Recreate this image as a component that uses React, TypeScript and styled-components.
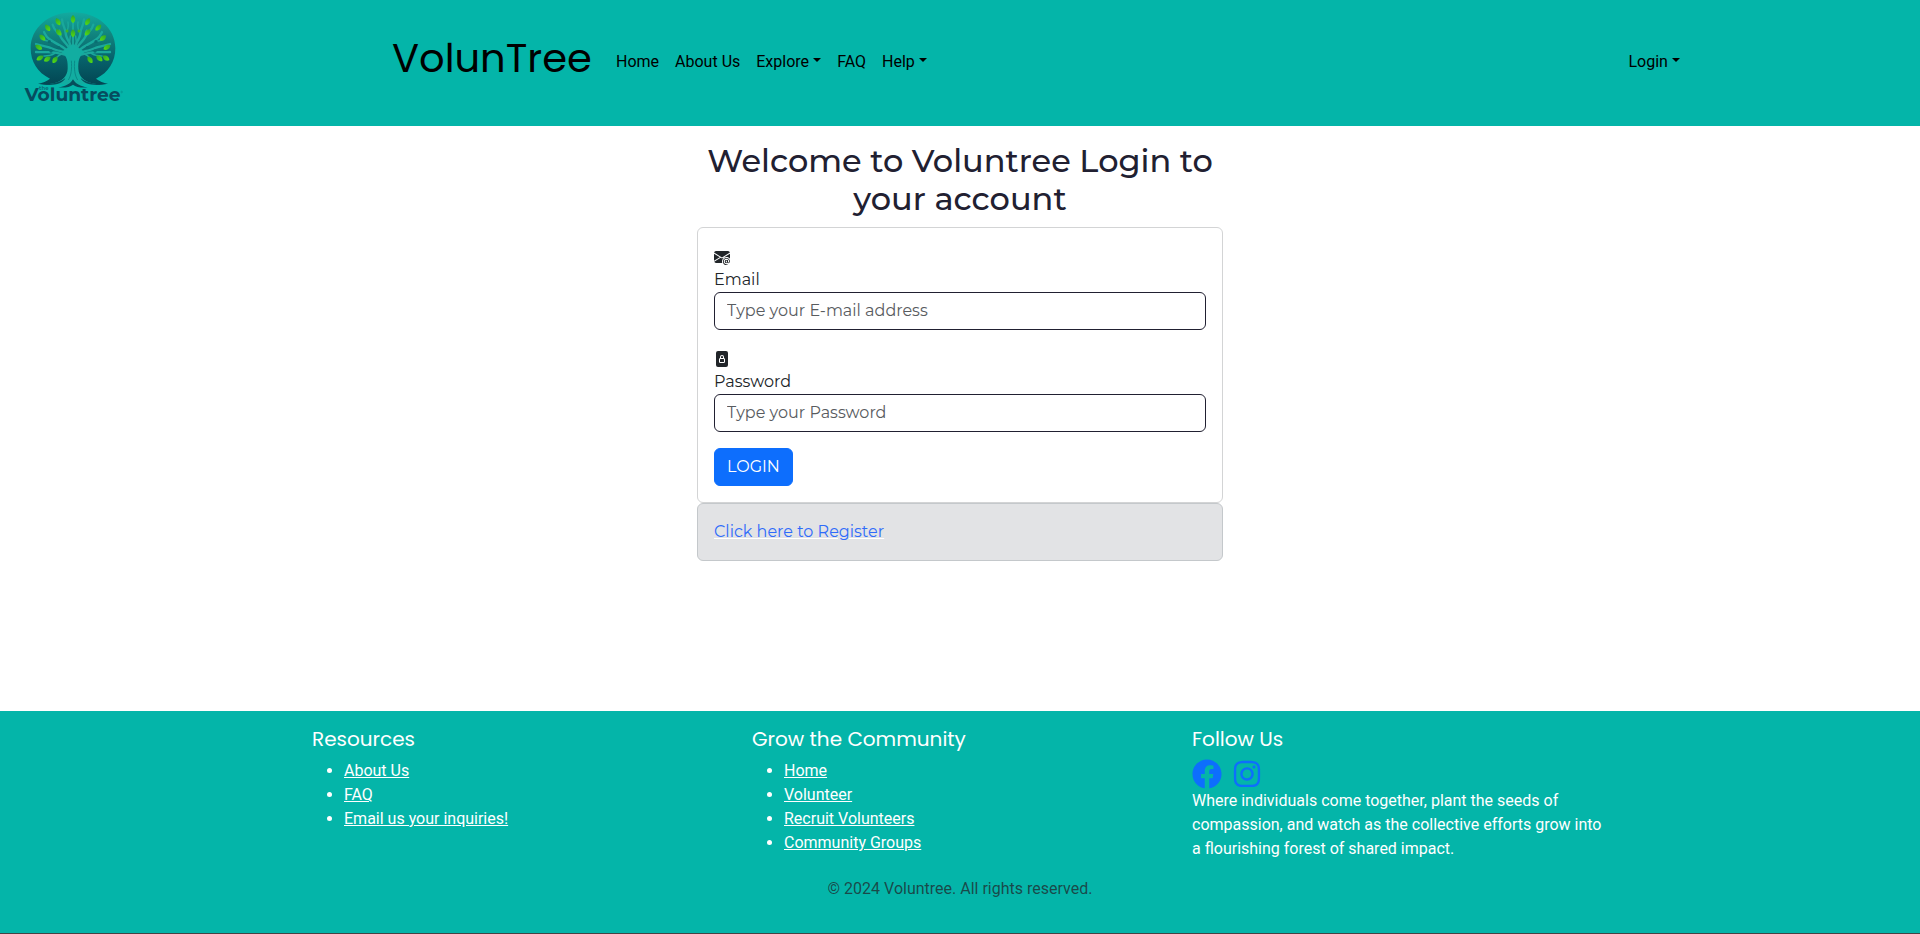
import React from 'react';
import styled, { createGlobalStyle } from 'styled-components';
import { BsEnvelopeAtFill, BsFileLockFill } from 'react-icons/bs';
import { FaFacebook, FaInstagram } from 'react-icons/fa';

const TEAL = '#04b5a9';
const display = "Poppins, Inter, 'Open Sans', sans-serif";
const formFont = "Montserrat, Inter, 'Open Sans', sans-serif";

const GlobalStyle = createGlobalStyle`
  *, *::before, *::after { box-sizing: border-box; }
  html { background: #444; }
  body {
    margin: 0;
    background: #444;
    color: #212529;
    font: 400 16px/1.5 Roboto, sans-serif;
  }
  svg { vertical-align: middle; }
`;

const Page = styled.div`
  display: flex;
  flex-direction: column;
  height: 933px;
  background: #fff;
`;

const Header = styled.header`
  display: flex;
  align-items: flex-start;
  flex: none;
  height: 126px;
  background: ${TEAL};
`;

const LogoLink = styled.a`
  display: block;
  width: 160px;
  height: 126px;
`;

const Nav = styled.nav`
  display: flex;
  align-items: center;
  flex: 1;
  height: 123px;
  margin: 0 232px;
`;

const Brand = styled.a`
  width: 216px;
  padding-bottom: 8px;
  color: #000;
  font-family: ${display};
  font-size: 40px;
  line-height: 60px;
  white-space: nowrap;
`;

const NavLinks = styled.div`
  display: flex;
  flex: 1;
`;

const NavLink = styled.a<{ $caret?: boolean; $end?: boolean }>`
  padding: 8px;
  margin-left: ${(p) => (p.$end ? 'auto' : '0')};
  color: #000;
  white-space: nowrap;

  &::after {
    content: '';
    display: ${(p) => (p.$caret ? 'inline-block' : 'none')};
    margin-left: 0.255em;
    vertical-align: 0.255em;
    border-top: 0.3em solid;
    border-right: 0.3em solid transparent;
    border-left: 0.3em solid transparent;
  }
`;

const Main = styled.main`
  flex: 1;
  width: 526px;
  margin: 0 auto;
  padding-top: 16px;
  font-family: ${formFont};
  font-size: 16px;
  line-height: 24px;
`;

const Title = styled.h2`
  margin: 0 0 8px;
  color: #212031;
  font-size: 32px;
  font-weight: 500;
  line-height: 38.4px;
  text-align: center;
`;

const Card = styled.section<{ $muted?: boolean }>`
  padding: 16px;
  border: 1px solid ${(p) => (p.$muted ? '#c4c8cb' : '#d3d4d5')};
  border-radius: 6px;
  background: ${(p) => (p.$muted ? '#e2e3e5' : '#fff')};
`;

const Field = styled.div`
  margin-bottom: 16px;
`;

const IconLine = styled.div`
  height: 24px;
`;

const Label = styled.label`
  display: block;
`;

const Input = styled.input`
  display: block;
  width: 100%;
  height: 38px;
  padding: 6px 12px;
  border: 1px solid #212031;
  border-radius: 6px;
  background: #fff;
  font: inherit;

  &::placeholder { color: #595c5f; opacity: 1; }
`;

const Button = styled.button`
  display: block;
  height: 38px;
  padding: 6px 12px;
  border: 1px solid #0d6efd;
  border-radius: 6px;
  background: #0d6efd;
  color: #fff;
  font: inherit;
`;

const RegisterLink = styled.a`
  color: #2f6bfa;
  text-decoration: underline;
  text-decoration-color: #fff;
`;

const Footer = styled.footer`
  flex: none;
  height: 222px;
  padding-top: 16px;
  background: ${TEAL};
  color: #fff;
`;

const Columns = styled.div`
  display: grid;
  grid-template-columns: repeat(3, 440px);
  width: 1320px;
  height: 150px;
  margin: 0 auto;
  padding-left: 12px;
`;

const FooterTitle = styled.h5`
  margin: 0 0 8px;
  font-family: ${display};
  font-size: 20px;
  font-weight: 400;
  line-height: 24px;
`;

const List = styled.ul`
  margin: 0;
  padding-left: 32px;
`;

const ListLink = styled.a`
  text-decoration: underline;
`;

const Socials = styled.div`
  display: flex;
  gap: 10px;
  height: 30px;
  color: #0d6efd;
  font-size: 30px;
`;

const Blurb = styled.p`
  width: 416px;
  margin: 0;
`;

const Copyright = styled.p`
  margin: 0;
  color: rgba(33, 37, 41, 0.75);
  text-align: center;
`;

const leaves: [number, number, number][] = [
  [143, 83, -35], [174, 65, -30], [219, 57, 0], [263, 65, 30], [295, 83, 45],
  [127, 113, -45], [176, 97, -40], [219, 100, 0], [263, 97, 40], [309, 114, 50],
  [116, 142, -60], [321, 142, 60], [120, 174, 60], [165, 179, 35], [142, 177, 55],
  [270, 179, -35], [298, 175, -50], [318, 174, -55],
];

const buds: [number, number][] = [[201, 93], [237, 93]];

// Left half of the crown; the right half is its mirror image.
const limbs = [
  'M212 182 C204 160 184 162 166 158 S130 158 108 156',
  'M212 172 C198 150 180 156 160 147 S134 140 108 132',
  'M212 164 C196 140 176 136 158 124 S138 108 132 96',
  'M214 156 C206 134 188 124 182 110 S162 92 158 74',
  'M216 150 C214 130 198 118 197 100 S188 80 186 58',
];
const twigs = [
  'M166 158 C156 168 142 166 132 168',
  'M184 162 C176 166 172 170 168 174',
  'M158 124 C146 124 138 124 130 118',
  'M182 110 C184 100 182 98 178 90',
  'M197 100 C204 90 206 78 204 66',
  'M219 150 L219 112',
  'M208 140 C208 126 210 120 211 108',
  'M219 88 L219 66',
];

function CrownHalf() {
  return (
    <g fill="none" stroke="#1aa89c" strokeLinecap="round">
      {limbs.map((d) => <path key={d} d={d} strokeWidth="7" />)}
      {twigs.map((d) => <path key={d} d={d} strokeWidth="4.5" />)}
    </g>
  );
}

function Logo() {
  return (
    <svg width="160" height="126" viewBox="0 0 480 378" role="img" aria-label="the Voluntree">
      <defs>
        <linearGradient id="crown" x1="0" y1="0" x2="0" y2="1">
          <stop offset="0" stopColor="#12aaa0" />
          <stop offset="0.3" stopColor="#11857f" />
          <stop offset="0.62" stopColor="#07646d" />
          <stop offset="1" stopColor="#034653" />
        </linearGradient>
        <linearGradient id="leaf" x1="0" y1="0" x2="0" y2="1">
          <stop offset="0" stopColor="#2fa42a" />
          <stop offset="1" stopColor="#55dc13" />
        </linearGradient>
      </defs>
      <path
        d="M150 236 C112 218 92 184 92 145 C92 84 146 37 219 37 S346 84 346 145 C346 184 326 218 288 236 C299 244 310 249 324 251 C285 255 252 250 231 232 L207 232 C186 250 153 255 114 251 C128 249 140 244 150 236 Z"
        fill="url(#crown)"
      />
      <CrownHalf />
      <g transform="translate(438 0) scale(-1 1)"><CrownHalf /></g>
      <path
        d="M184 156 C201 166 204 186 203 206 C202 228 188 243 160 250 L219 256 L278 250 C250 243 236 228 235 206 C234 186 237 166 254 156 L219 132 Z"
        fill="#12ada1"
      />
      <path
        d="M214 182 C216 206 214 226 205 240 M224 182 C222 206 224 226 233 240"
        fill="none" stroke="#0a8a88" strokeWidth="3"
      />
      <path
        d="M114 251 C146 254 178 250 196 234 C188 254 153 259 114 251 Z M324 251 C292 254 260 250 242 234 C250 254 285 259 324 251 Z M175 262 C197 260 212 251 219 238 C226 251 241 260 263 262 C244 264 228 261 219 254 C210 261 194 264 175 262 Z"
        fill="#064e5b"
      />
      {[[148, 125], [176, 143], [153, 153], [285, 153], [262, 143], [288, 125]].map(([x, y]) => (
        <circle key={`${x}-${y}`} cx={x} cy={y} r="5" fill="#0a6e72" />
      ))}
      {leaves.map(([x, y, angle]) => (
        <path
          key={`${x}-${y}`}
          d="M0 -12 C9 -5 9 6 0 12 C-9 6 -9 -5 0 -12 Z"
          fill="url(#leaf)"
          transform={`translate(${x} ${y}) rotate(${angle})`}
        />
      ))}
      {buds.map(([x, y]) => (
        <circle key={x} cx={x} cy={y} r="4.5" fill="#3bb51f" />
      ))}
      <text
        x="117" y="271" fill="#07707a" fontFamily="Montserrat, Inter, sans-serif"
        fontSize="16" fontWeight="700" textLength="29"
      >
        the
      </text>
      <text
        x="74" y="304" fill="#064c5e" fontFamily="Montserrat, Inter, sans-serif"
        fontSize="52" fontWeight="700" textLength="288" lengthAdjust="spacingAndGlyphs"
      >
        Voluntree
      </text>
      <circle cx="365" cy="276" r="2.5" fill="none" stroke="#07747a" strokeWidth="1" />
    </svg>
  );
}

function LinkList({ items }: { items: string[] }) {
  return (
    <List>
      {items.map((item) => (
        <li key={item}><ListLink>{item}</ListLink></li>
      ))}
    </List>
  );
}

export default function App() {
  return (
    <Page>
      <GlobalStyle />
      <Header>
        <LogoLink><Logo /></LogoLink>
        <Nav>
          <Brand>VolunTree</Brand>
          <NavLinks>
            <NavLink>Home</NavLink>
            <NavLink>About Us</NavLink>
            <NavLink $caret>Explore</NavLink>
            <NavLink>FAQ</NavLink>
            <NavLink $caret>Help</NavLink>
            <NavLink $caret $end>Login</NavLink>
          </NavLinks>
        </Nav>
      </Header>

      <Main>
        <Title>Welcome to Voluntree Login to your account</Title>
        <Card>
          <Field>
            <IconLine><BsEnvelopeAtFill /></IconLine>
            <Label htmlFor="email">Email</Label>
            <Input id="email" type="email" placeholder="Type your E-mail address" />
          </Field>
          <Field>
            <IconLine><BsFileLockFill /></IconLine>
            <Label htmlFor="password">Password</Label>
            <Input id="password" type="password" placeholder="Type your Password" />
          </Field>
          <Button type="button">LOGIN</Button>
        </Card>
        <Card $muted>
          <RegisterLink>Click here to Register</RegisterLink>
        </Card>
      </Main>

      <Footer>
        <Columns>
          <div>
            <FooterTitle>Resources</FooterTitle>
            <LinkList items={['About Us', 'FAQ', 'Email us your inquiries!']} />
          </div>
          <div>
            <FooterTitle>Grow the Community</FooterTitle>
            <LinkList items={['Home', 'Volunteer', 'Recruit Volunteers', 'Community Groups']} />
          </div>
          <div>
            <FooterTitle>Follow Us</FooterTitle>
            <Socials>
              <FaFacebook />
              <FaInstagram />
            </Socials>
            <Blurb>
              Where individuals come together, plant the seeds of compassion, and watch as the
              collective efforts grow into a flourishing forest of shared impact.
            </Blurb>
          </div>
        </Columns>
        <Copyright>© 2024 Voluntree. All rights reserved.</Copyright>
      </Footer>
    </Page>
  );
}
